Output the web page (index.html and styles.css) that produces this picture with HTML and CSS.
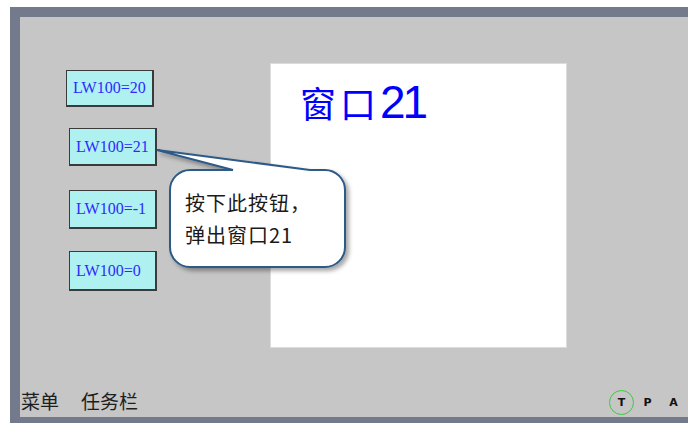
FILE: index.html
```html
<!DOCTYPE html>
<html lang="zh">
<head>
<meta charset="utf-8">
<title>窗口21</title>
<link rel="stylesheet" href="styles.css">
</head>
<body>
<div class="frame">
  <div class="screen">
    <div class="main">
      <div class="buttons">
        <div class="btn b1">LW100=20</div>
        <div class="btn b2">LW100=21</div>
        <div class="btn b3">LW100=-1</div>
        <div class="btn b4">LW100=0</div>
      </div>
      <div class="panel">
        <div class="title"><span class="cjk">窗口</span><span class="num">21</span></div>
      </div>
    </div>
    <div class="footer">
      <div class="menu"><span>菜单</span><span>任务栏</span></div>
      <div class="status">
        <span class="ind active">T</span>
        <span class="ind">P</span>
        <span class="ind">A</span>
      </div>
    </div>
    <div class="callout">
      <svg class="bubble" width="200" height="135" viewBox="0 0 200 135">
        <defs>
          <filter id="sh" x="-10%" y="-10%" width="130%" height="130%">
            <feDropShadow dx="3" dy="3" stdDeviation="2" flood-color="#000" flood-opacity="0.35"/>
          </filter>
        </defs>
        <path d="M 35 25 H 78 L 2 5 L 155 25 H 170 A 20 20 0 0 1 190 45 V 102 A 20 20 0 0 1 170 122 H 35 A 20 20 0 0 1 15 102 V 45 A 20 20 0 0 1 35 25 Z" fill="#ffffff" stroke="#2d5a87" stroke-width="2" filter="url(#sh)"/>
      </svg>
      <div class="callout-text">按下此按钮，<br>弹出窗口21</div>
    </div>
  </div>
</div>
</body>
</html>
```
FILE: styles.css
```css
html, body {
  margin: 0;
  padding: 0;
  background: #ffffff;
}
body {
  width: 688px;
  height: 423px;
  overflow: hidden;
  font-family: "Noto Sans CJK SC", sans-serif;
}
.frame {
  margin: 7px 0 0 10px;
  width: 678px;
  height: 416px;
  box-sizing: border-box;
  border-top: 10px solid #737a8c;
  border-left: 10px solid #737a8c;
  border-bottom: 6px solid #737a8c;
  background: #c6c6c6;
}
.screen {
  position: relative;
  height: 400px;
  display: flex;
  flex-direction: column;
}
.main {
  flex: 1;
  display: flex;
}
.buttons {
  width: 250px;
  display: flex;
  flex-direction: column;
  align-items: flex-start;
}
.btn {
  box-sizing: border-box;
  width: 88px;
  background: #aff0f0;
  border: 1px solid #3a3a3a;
  border-right-width: 2px;
  border-bottom-width: 2px;
  color: #2b2bff;
  font-family: "Liberation Serif", serif;
  font-size: 16px;
  display: flex;
  align-items: center;
  padding-left: 6px;
  white-space: nowrap;
}
.b1 { margin: 53px 0 0 46px; height: 37px; }
.b2 { margin: 21px 0 0 49px; height: 38px; }
.b3 { margin: 24px 0 0 49px; height: 39px; }
.b4 { margin: 22px 0 0 49px; height: 40px; }
.panel {
  margin-top: 46px;
  width: 297px;
  height: 285px;
  box-sizing: border-box;
  background: #ffffff;
  border: 1px solid #dcdcdc;
  padding: 14px 0 0 29px;
}
.title {
  color: #0000ff;
  display: flex;
  align-items: baseline;
  line-height: 48px;
}
.title .cjk {
  font-family: "Noto Sans CJK SC", sans-serif;
  font-size: 36px;
  letter-spacing: 4px;
}
.title .num {
  font-family: "Liberation Sans", sans-serif;
  font-size: 46px;
  letter-spacing: -3px;
}
.footer {
  height: 30px;
  display: flex;
  align-items: center;
  justify-content: space-between;
}
.menu {
  display: flex;
  gap: 22px;
  font-size: 19px;
  color: #1e1e1e;
  padding-left: 1px;
  margin-top: -4px;
}
.status {
  display: flex;
  align-items: center;
  padding-right: 2px;
}
.ind {
  width: 25px;
  height: 25px;
  box-sizing: border-box;
  display: flex;
  align-items: center;
  justify-content: center;
  font-family: "DejaVu Sans", sans-serif;
  font-weight: 600;
  font-size: 11px;
  color: #111;
  margin-left: 1px;
}
.ind.active {
  border: 1px solid #3ccc3c;
  border-radius: 50%;
}
.callout {
  position: absolute;
  left: 135px;
  top: 128px;
  width: 200px;
  height: 135px;
}
.bubble {
  position: absolute;
  left: 0;
  top: 0;
}
.callout-text {
  position: absolute;
  left: 30px;
  top: 42px;
  font-size: 20px;
  line-height: 32px;
  letter-spacing: 1px;
  color: #1a1a1a;
  white-space: nowrap;
}
```
